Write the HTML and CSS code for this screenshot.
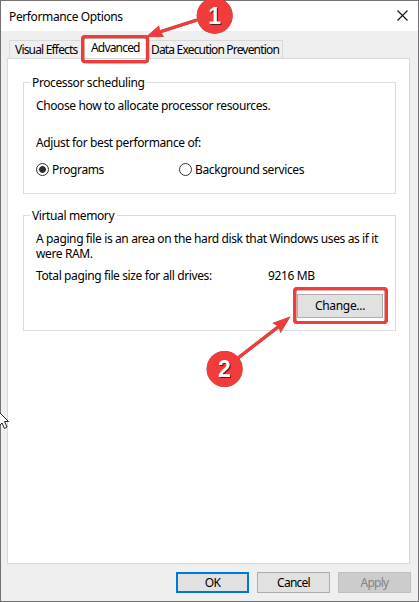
FILE: index.html
```html
<!DOCTYPE html>
<html lang="en">
<head>
  <meta charset="utf-8">
  <title>Performance Options</title>
  <link rel="stylesheet" href="styles.css">
</head>
<body>
  <div class="window">
    <header class="titlebar">
      <h1>Performance Options</h1>
      <svg class="close" width="11" height="11" viewBox="0 0 11 11"><path d="M.5 .5l10 10M10.5 .5l-10 10" stroke="#111" stroke-width="1.1"/></svg>
    </header>

    <nav class="tabs">
      <div class="tab tab-visual">Visual Effects</div>
      <div class="tab tab-active">Advanced</div>
      <div class="tab tab-dep">Data Execution Prevention</div>
    </nav>

    <main class="panel">
      <section class="group scheduling">
        <h2>Processor scheduling</h2>
        <p>Choose how to allocate processor resources.</p>
        <p class="adjust">Adjust for best performance of:</p>
        <div class="radios">
          <label class="radio"><i class="dot checked"></i>Programs</label>
          <label class="radio"><i class="dot"></i>Background services</label>
        </div>
      </section>

      <section class="group memory">
        <h2>Virtual memory</h2>
        <p class="about">A paging file is an area on the hard disk that Windows uses as if it<br>were RAM.</p>
        <div class="total"><span class="total-label">Total paging file size for all drives:</span><span>9216 MB</span></div>
        <button class="change">Change...</button>
      </section>
    </main>

    <footer class="actions">
      <button class="ok">OK</button>
      <button>Cancel</button>
      <button disabled>Apply</button>
    </footer>
  </div>

  <!-- step markers, arrows and mouse pointer -->
  <svg class="marks" width="419" height="602" viewBox="0 0 419 602">
    <g class="mark">
      <rect x="82.7" y="36.7" width="64.8" height="25" rx="2.5"/>
      <path class="line" d="M197 20L158 32.5"/>
      <path class="head" d="M146 37L159 25.5L160 31L164 37Z"/>
      <circle cx="214.7" cy="15.7" r="18"/>
    </g>
    <g class="mark">
      <rect x="294.7" y="288.7" width="91.6" height="33.8" rx="2.5"/>
      <path class="line" d="M238 358L280 325.5"/>
      <path class="head" d="M290.5 316.5L272.5 323L278.500 326.500L280.5 333Z"/>
      <circle cx="224.6" cy="369" r="18"/>
    </g>
    <text class="num" x="214.4" y="23.5">1</text>
    <text class="num" x="224.2" y="377">2</text>
    <path d="M0 413L8.5 421.5H4.5L7 427L4.5 428.5L2 423L0 425" fill="#fff" stroke="#222" stroke-width="1"/>
  </svg>
</body>
</html>
```
FILE: styles.css
```css
* {
  box-sizing: border-box;
}
body {
  margin: 0;
  font: 12px/15px "Noto Sans", "Open Sans", sans-serif;
  letter-spacing: -0.38px;
  color: #000;
  white-space: nowrap;
}
h1, h2, p {
  margin: 0;
  font-size: inherit;
  font-weight: normal;
}
.window {
  width: 419px;
  height: 602px;
  border: 1px solid #737173;
  background: #efefef;
  display: flex;
  flex-direction: column;
}
.titlebar {
  height: 30px;
  padding: 0 10px 0 8px;
  background: #fff;
  display: flex;
  align-items: center;
  justify-content: space-between;
}
.close {
  margin-bottom: 2px;
}

.tabs {
  height: 27px;
  padding: 9px 0 0 8px;
  display: flex;
}
.tab {
  height: 18px;
  border: 1px solid #d9d9d9;
  border-bottom: 0;
  line-height: 18px;
  letter-spacing: -0.82px;
}
.tab-visual {
  width: 73px;
  padding-left: 5px;
}
.tab-active {
  width: 66px;
  height: 22px;
  margin-top: -2px;
  padding-left: 8px;
  background: #fff;
}
.tab-dep {
  width: 135px;
  padding-left: 2px;
}

.panel {
  width: 403px;
  height: 506px;
  margin-left: 6px;
  padding: 23px 14px 0 15px;
  border: 1px solid #d9d9d9;
  background: #fff;
}
.group {
  width: 373px;
  padding: 0 0 0 12px;
  border: 1px solid #dcdcdc;
}
.group h2 {
  width: max-content;
  margin: -8px 0 0 -6px;
  padding: 0 3px 0 2px;
  background: #fff;
}
.scheduling {
  height: 112px;
}
.scheduling p {
  margin-top: 8px;
}
.scheduling .adjust {
  margin-top: 22px;
}
.radios {
  margin-top: 12px;
  display: flex;
}
.radio {
  width: 143px;
  display: flex;
  align-items: center;
  gap: 3px;
}
.dot {
  width: 13px;
  height: 13px;
  border: 1px solid #333;
  border-radius: 50%;
  flex: none;
}
.checked {
  background: radial-gradient(circle, #332c30 3px, #fff 3.8px);
}
.memory {
  height: 116px;
  margin-top: 21px;
}
.about {
  padding-top: 8px;
}
.total {
  margin-top: 7px;
  display: flex;
}
.total-label {
  width: 232px;
}

button {
  width: 73px;
  height: 21px;
  padding: 0;
  border: 1px solid #adadad;
  background: #e1e1e1;
  color: #000;
  font: inherit;
  line-height: 19px;
  letter-spacing: -0.75px;
}
button:disabled {
  background: #ccc;
  border-color: #bfbfbf;
  color: #838383;
}
.change {
  display: block;
  width: 86px;
  height: 24px;
  margin: 11px 0 0 261px;
  line-height: 22px;
  letter-spacing: -0.3px;
}
.actions {
  padding: 8px 7px 0 0;
  display: flex;
  justify-content: flex-end;
  gap: 8px;
}
.ok {
  border: 2px solid #0078d7;
  line-height: 17px;
}

.marks {
  position: absolute;
  left: 0;
  top: 0;
  pointer-events: none;
}
.mark {
  fill: #f23c3c;
  filter: drop-shadow(0 0.5px 0.6px rgba(0, 0, 0, 0.6));
}
.mark rect, .line {
  fill: none;
  stroke: #f23c3c;
  stroke-width: 3.2;
}
.num {
  fill: #fff;
  font: bold 23px "Liberation Sans", sans-serif;
  text-anchor: middle;
  filter: drop-shadow(1px 1px 0.6px rgba(0, 0, 0, 0.6));
}
```
